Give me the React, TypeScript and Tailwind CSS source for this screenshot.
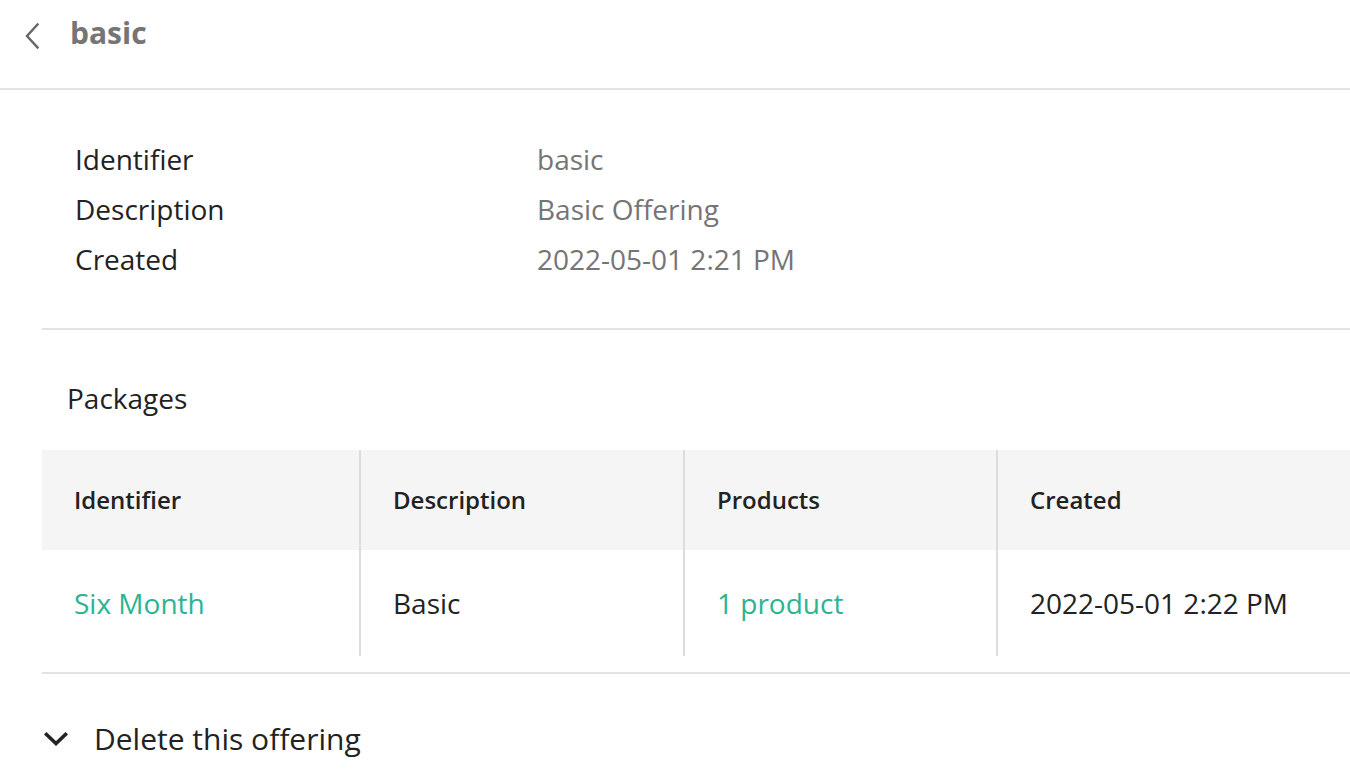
import React from 'react';

// Offering detail page: header, summary, packages table, danger zone

const summary = [
  { label: 'Identifier', value: 'basic' },
  { label: 'Description', value: 'Basic Offering' },
  { label: 'Created', value: '2022-05-01 2:21 PM' },
];

const columns = ['Identifier', 'Description', 'Products', 'Created'];

const BackIcon = () => (
  <svg width="14" height="26" viewBox="0 0 14 26" fill="none" aria-hidden="true">
    <polyline points="12.5,1.5 2,13 12.5,24.5" stroke="#666666" strokeWidth="2.4" strokeLinecap="square" />
  </svg>
);

const ChevronDownIcon = () => (
  <svg width="24" height="15" viewBox="0 0 24 15" fill="none" aria-hidden="true">
    <polyline points="2.5,2.5 12,11.5 21.5,2.5" stroke="#222222" strokeWidth="3.6" strokeLinecap="square" />
  </svg>
);

export default function App() {
  return (
    <div className="min-h-screen bg-white font-['Open_Sans',sans-serif] text-[#222222] overflow-hidden">
      {/* Top bar */}
      <header className="flex h-[90px] items-start gap-[31px] border-b-2 border-[#e2e2e2] pl-[25px] pt-[11px]">
        <button className="mt-[12px] flex items-center" aria-label="Back">
          <BackIcon />
        </button>
        <h1 className="mt-[2px] text-[30px] font-bold leading-[40px] text-[#757575]">basic</h1>
      </header>

      <main className="pl-[42px]">
        {/* Summary */}
        <section className="border-b-2 border-[#e2e2e2] pb-[44px] pl-[33px] pt-[44px]">
          <dl className="grid grid-cols-[462px_1fr] text-[28px] leading-[50px]">
            {summary.map((row) => (
              <React.Fragment key={row.label}>
                <dt className="text-[#222222]">{row.label}</dt>
                <dd className="text-[#757575]">{row.value}</dd>
              </React.Fragment>
            ))}
          </dl>
        </section>

        {/* Packages */}
        <section className="border-b-2 border-[#e2e2e2] pb-[16px] pt-[48px]">
          <h2 className="pl-[25px] text-[28px] leading-[40px] text-[#222222]">Packages</h2>
          <div className="mt-[32px] grid grid-cols-[319px_324px_313px_1fr]">
            {columns.map((col, i) => (
              <div
                key={col}
                className={`flex h-[100px] items-center bg-[#f5f5f5] pl-[32px] pr-[30px] text-[24px] font-semibold text-[#222222] ${
                  i < 3 ? 'border-r-2 border-[#dddddd]' : ''
                }`}
              >
                {col}
              </div>
            ))}
            <div className="flex h-[106px] items-center border-r-2 border-[#dddddd] pl-[32px] pr-[30px] text-[28px] text-[#2db392]">
              Six Month
            </div>
            <div className="flex h-[106px] items-center border-r-2 border-[#dddddd] pl-[32px] pr-[30px] text-[28px] text-[#222222]">
              Basic
            </div>
            <div className="flex h-[106px] items-center border-r-2 border-[#dddddd] pl-[32px] pr-[30px] text-[28px] text-[#2db392]">
              1 product
            </div>
            <div className="flex h-[106px] items-center whitespace-nowrap pl-[32px] pr-[30px] text-[28px] text-[#222222]">
              2022-05-01 2:22 PM
            </div>
          </div>
        </section>

        {/* Danger zone toggle */}
        <section className="pt-[45px]">
          <button className="flex items-center gap-[26px] pl-[2px] text-[30px] leading-[40px] text-[#222222]">
            <ChevronDownIcon />
            <span>Delete this offering</span>
          </button>
        </section>
      </main>
    </div>
  );
}
